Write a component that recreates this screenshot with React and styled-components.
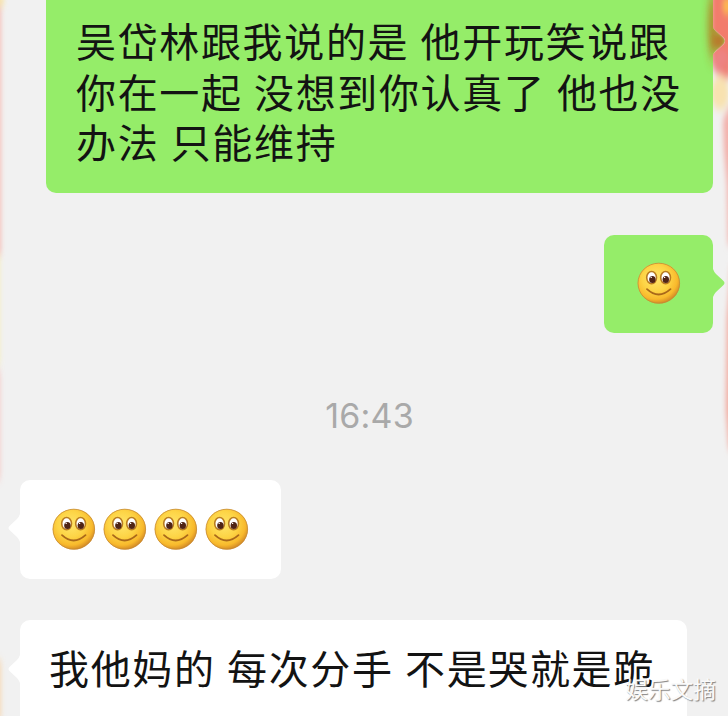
import React from 'react';
import styled, { createGlobalStyle } from 'styled-components';

const GlobalStyle = createGlobalStyle`
  body {
    margin: 0;
    background: #f1f1f1;
  }
`;

const Screen = styled.main`
  position: relative;
  display: flex;
  flex-direction: column;
  width: 728px;
  height: 716px;
  overflow: hidden;
  background: #f1f1f1;
  font-family: 'Noto Sans CJK SC', sans-serif;
`;

const Row = styled.div`
  display: flex;
  flex-shrink: 0;
  justify-content: ${({ $mine }) => ($mine ? 'flex-end' : 'flex-start')};
  margin-top: ${({ $gap }) => $gap || 0}px;
  padding: 0 15px 0 20px;
`;

const Bubble = styled.div`
  position: relative;
  box-sizing: border-box;
  display: flex;
  align-items: ${({ $top }) => ($top ? 'flex-start' : 'center')};
  width: ${({ $width }) => $width}px;
  height: ${({ $height }) => $height}px;
  padding: ${({ $padding }) => $padding};
  border-radius: ${({ $cut }) => ($cut ? '0 0 10px 10px' : '10px')};
  background: ${({ $mine }) => ($mine ? '#95ed69' : '#fff')};
`;

const TailSvg = styled.svg`
  position: absolute;
  top: ${({ $y }) => $y}px;
  ${({ $mine }) => ($mine ? 'left: 100%;' : 'right: 100%; transform: scaleX(-1);')}
  margin: 0 -1px;
`;

const Text = styled.p`
  margin: 0;
  color: #131313;
  font-size: 40px;
  line-height: 50.6px;
  letter-spacing: 1.65px;
  word-spacing: 0.8px;
  white-space: nowrap;
`;

const Faces = styled.div`
  display: flex;
  gap: 7px;
`;

const Time = styled.time`
  flex-shrink: 0;
  margin-top: 62px;
  padding-left: 11px;
  color: #a9a9a9;
  font-family: Inter, 'Liberation Sans', sans-serif;
  font-size: 34px;
  line-height: 42px;
  letter-spacing: 0.2px;
  text-align: center;
`;

const Petals = styled.svg`
  position: absolute;
  top: 0;
  left: 0;
  pointer-events: none;
`;

const Watermark = styled.span`
  position: absolute;
  right: 12px;
  bottom: 12px;
  color: #fafafa;
  font-size: 22.7px;
  line-height: 30px;
  text-shadow: 1px 1px 1px #808080;
`;

const Tail = ({ y, mine }) => (
  <TailSvg $y={y} $mine={mine} width="13" height="30" viewBox="0 0 13 30">
    <path
      d="M0 1 L1 1 Q2 4 4 6 L11 12.5 Q14 15 11 17.5 L4 24 Q2 26 1 29 L0 29 Z"
      fill={mine ? '#95ed69' : '#fff'}
    />
  </TailSvg>
);

const Smile = () => (
  <svg width="44" height="44" viewBox="0 0 44 44">
    <defs>
      <radialGradient id="skin" cx="43%" cy="38%" r="64%">
        <stop offset="0" stopColor="#ffe56a" />
        <stop offset="0.5" stopColor="#fdd445" />
        <stop offset="0.8" stopColor="#f8b92c" />
        <stop offset="1" stopColor="#cf8526" />
      </radialGradient>
    </defs>
    <ellipse cx="21.8" cy="21.2" rx="21" ry="20.3" fill="url(#skin)" />
    <ellipse cx="21.8" cy="21.2" rx="20.8" ry="20" fill="none" stroke="#c58a35" strokeWidth="0.8" />
    <ellipse cx="14.6" cy="15.6" rx="4.9" ry="6.1" fill="#fff" stroke="#b97c20" strokeWidth="1.6" />
    <ellipse cx="28.6" cy="15.6" rx="4.9" ry="6.1" fill="#fff" stroke="#b97c20" strokeWidth="1.6" />
    <ellipse cx="15.4" cy="17.6" rx="3.2" ry="3.5" fill="#4f2416" />
    <ellipse cx="28.8" cy="17.6" rx="3.2" ry="3.5" fill="#4f2416" />
    <circle cx="14.2" cy="15.4" r="0.7" fill="#fff" />
    <circle cx="27.6" cy="15.4" r="0.7" fill="#fff" />
    <path d="M10 27.2 Q21.5 37.8 33.5 27.2" fill="none" stroke="#a9681a" strokeWidth="1.8" strokeLinecap="round" />
  </svg>
);

const App = () => (
  <>
    <GlobalStyle />
    <Screen>
      <Row $mine>
        <Bubble $mine $cut $top $width={667} $height={193} $padding="15px 0 0 30px">
          <Text>
            吴岱林跟我说的是 他开玩笑说跟
            <br />
            你在一起 没想到你认真了 他也没
            <br />
            办法 只能维持
          </Text>
          <Tail mine y={26} />
        </Bubble>
      </Row>
      <Row $mine $gap={42}>
        <Bubble $mine $width={109} $height={98} $padding="0 0 0 33px">
          <Faces>
            <Smile />
          </Faces>
          <Tail mine y={33} />
        </Bubble>
      </Row>
      <Time>16:43</Time>
      <Row $gap={43}>
        <Bubble $width={261} $height={99} $padding="0 0 0 32px">
          <Faces>
            <Smile />
            <Smile />
            <Smile />
            <Smile />
          </Faces>
          <Tail y={33} />
        </Bubble>
      </Row>
      <Row $gap={41}>
        <Bubble $top $width={667} $height={110} $padding="22px 0 0 29px">
          <Text>我他妈的 每次分手 不是哭就是跪</Text>
          <Tail y={34} />
        </Bubble>
      </Row>

      {/* blossom border showing at both edges */}
      <Petals width="728" height="716" viewBox="0 0 728 716">
        <defs>
          <filter id="soft" filterUnits="userSpaceOnUse" x="-20" y="-20" width="770" height="760">
            <feGaussianBlur stdDeviation="2.5 4" />
          </filter>
          <filter id="haze" filterUnits="userSpaceOnUse" x="680" y="-60" width="70" height="200">
            <feGaussianBlur stdDeviation="3.5 8" />
          </filter>
          <clipPath id="margin">
            <path d="M713 0 H728 V716 H713 V54 L724 44 Q726 41 724 38 L713 28 Z" />
          </clipPath>
          <clipPath id="bubble">
            <path d="M680 0 H713 V28 L724 38 Q726 41 724 44 L713 54 V193 H680 Z" />
          </clipPath>
        </defs>
        <g clipPath="url(#bubble)">
          <ellipse cx="713" cy="26" rx="5" ry="34" fill="#b18327" opacity="0.9" filter="url(#haze)" />
          <ellipse cx="719" cy="41" rx="7" ry="9" fill="#b9782c" filter="url(#soft)" />
        </g>
        <g clipPath="url(#margin)">
          <g filter="url(#soft)">
            <rect x="711" y="-10" width="24" height="74" fill="#f27c6c" />
            <ellipse cx="727" cy="6" rx="4" ry="8" fill="#ffc04a" />
            <ellipse cx="721" cy="62" rx="9" ry="13" fill="#ec8484" />
            <ellipse cx="727" cy="70" rx="5" ry="9" fill="#ee7f76" />
            <ellipse cx="720" cy="93" rx="9" ry="17" fill="#f8e2b0" />
            <path d="M730 105 L723 120 L724 150 L727 185 L728 245 L738 245 V105 Z" fill="#f3b0aa" />
            <path d="M731 265 L727 320 L726 410 L729 450 H738 V265 Z" fill="#f3a79b" />
          </g>
        </g>
        <g filter="url(#soft)" opacity="0.8">
          <rect x="-6" y="0" width="7" height="255" fill="#f7b4ab" />
          <rect x="-6" y="-8" width="10" height="14" fill="#f8e29b" />
          <rect x="-6" y="255" width="6" height="110" fill="#f7efb5" />
          <rect x="-6" y="370" width="6" height="110" fill="#f7c0b9" />
          <rect x="-6" y="660" width="7" height="60" fill="#f8d3a8" />
        </g>
      </Petals>
      <Watermark>娱乐文摘</Watermark>
    </Screen>
  </>
);

export default App;
